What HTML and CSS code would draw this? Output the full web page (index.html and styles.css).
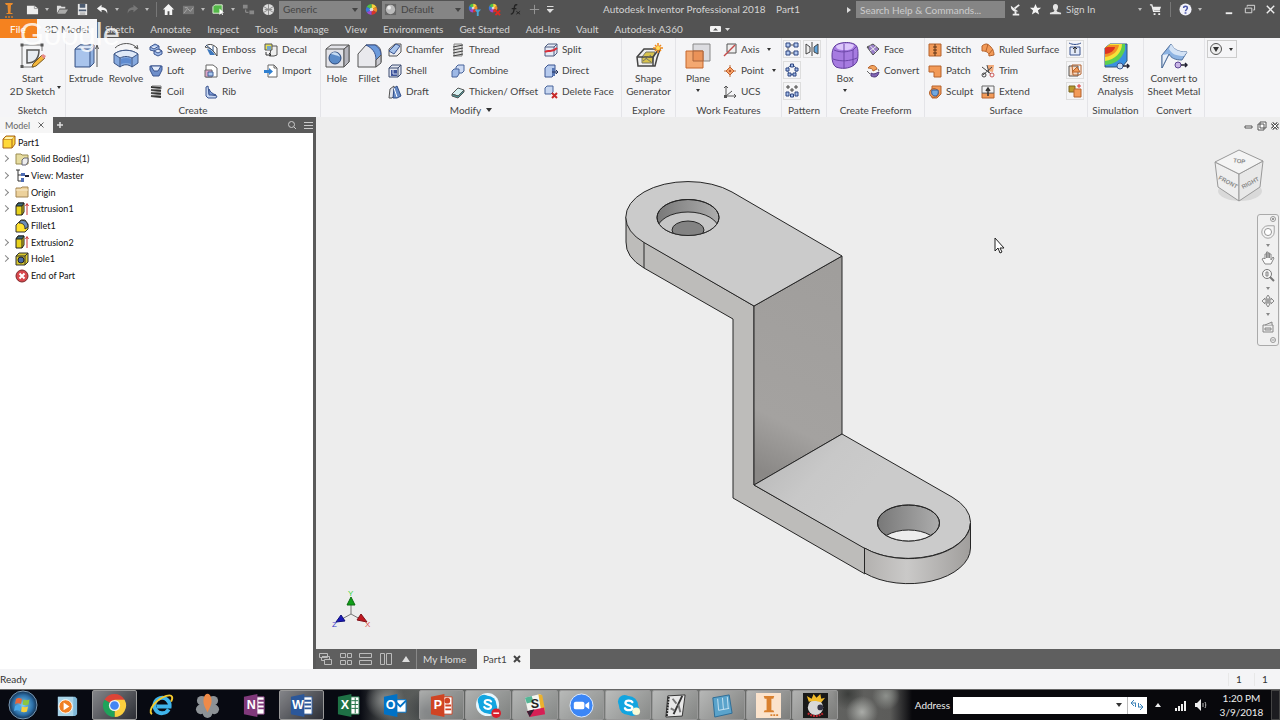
FILE: index.html
```html
<!DOCTYPE html>
<html lang="en">
<head>
  <meta charset="UTF-8" />
  <meta name="viewport" content="width=device-width, initial-scale=1.0" />
  <title>Autodesk Inventor Professional 2018 - Part1</title>
  <link rel="stylesheet" href="styles.css">
</head>
<body>
  <!-- shared icons -->
  <svg class="sprite" aria-hidden="true">
    <symbol id="wheel" viewBox="0 0 14 14">
      <path d="M7 7V1A6 6 0 0 1 12.200 4z" fill="#f7d23a"/><path d="M7 7l5.200-3a6 6 0 0 1 0 6z" fill="#f08a24"/>
      <path d="M7 7l5.200 3A6 6 0 0 1 7 13z" fill="#d8342c"/><path d="M7 7v6a6 6 0 0 1-5.200-3z" fill="#9a4bd0"/>
      <path d="M7 7l-5.200 3a6 6 0 0 1 0-6z" fill="#3a78e0"/><path d="M7 7L1.800 4A6 6 0 0 1 7 1z" fill="#4fc04a"/>
      <circle cx="7" cy="7" r="2" fill="#fff" opacity=".7"/>
    </symbol>
    <symbol id="extrusion" viewBox="0 0 14 14">
      <path d="M1 4l2-3h6v9l-2 3H1z" fill="#e8d21c" stroke="#222"/><path d="M1 4l2-3h6L7 4z" fill="#3d6a78" stroke="#222"/><path d="M7 4v9" stroke="#222"/>
      <path d="M12 13V2M10.500 4L12 1.500 13.500 4" stroke="#c33" fill="none"/>
    </symbol>
    <symbol id="skype" viewBox="0 0 26 26">
      <circle cx="9" cy="9" r="7" fill="#12a5e0"/><circle cx="17" cy="17" r="7" fill="#12a5e0"/><circle cx="13" cy="13" r="10" fill="#12a5e0"/>
      <path d="M17 9.500c-1-2-7-2.500-7.200.7-.2 3.200 7.400 2 7.200 5.300-.2 3.200-6.500 3-7.700.3" fill="none" stroke="#fff" stroke-width="2.400" stroke-linecap="round"/>
    </symbol>
  </svg>

  <header class="top">
    <div class="titlebar">
      <button class="logo" aria-label="Inventor"><svg viewBox="0 0 14 18"><path d="M3 2h8l-1 2H9l-.5 8H10l1 1H4l1-1h1L5.500 4H4z" fill="#e88a2c"/><path d="M3 16h8" stroke="#b5702e" stroke-width="2" stroke-dasharray="2 1"/></svg></button>
      <button class="qat" aria-label="New"><svg viewBox="0 0 14 14"><path d="M1 3h8l4 3v6H1z" fill="#eee"/><path d="M9 3v3h4" fill="none" stroke="#999"/></svg></button>
      <button class="caret" aria-label="New options"></button>
      <button class="qat" aria-label="Open"><svg viewBox="0 0 14 14"><path d="M1 11V3h4l1 1h4v2H4z" fill="#ddd"/><path d="M4 7h9l-3 4.500H1.500z" fill="#aaa"/></svg></button>
      <button class="qat" aria-label="Save"><svg viewBox="0 0 14 14"><path d="M2 1h10v12H2z" fill="#e8e8e8"/><path d="M4 1h6v4H4zM3 7h8v2H3z" fill="#4c5b70"/><path d="M4 10h6v3H4z" fill="#bbb"/></svg></button>
      <button class="qat" aria-label="Undo"><svg viewBox="0 0 14 14"><path d="M6 2L1 6l5 4V7.500c3 0 5 .5 6 4C13 7 10 4.500 6 4.500z" fill="#f4f4f4"/></svg></button>
      <button class="caret" aria-label="Undo list"></button>
      <button class="qat" aria-label="Redo"><svg viewBox="0 0 14 14"><path d="M8 2l5 4-5 4V7.500c-3 0-5 .5-6 4C1 7 4 4.500 8 4.500z" fill="#777"/></svg></button>
      <button class="caret" aria-label="Redo list"></button>
      <span class="divider"></span>
      <button class="qat" aria-label="Home"><svg viewBox="0 0 14 14"><path d="M7 1L1 7h2v6h3V9h2v4h3V7h2z" fill="#f4f4f4"/></svg></button>
      <button class="qat" aria-label="Return"><svg viewBox="0 0 14 14"><path d="M1 3h12v9H1z" fill="#777"/><path d="M2 11l4-5 3 3 3-4M3 5h3" stroke="#aaa" fill="none"/></svg></button>
      <button class="caret" aria-label="Return options"></button>
      <button class="qat" aria-label="Select"><svg viewBox="0 0 14 14"><path d="M1 4l2-2h8v7L9 11H1z" fill="#54b849" stroke="#e8f5e0"/><path d="M8 6v7l2-2 1 2 1-.5-1-2h2z" fill="#fff"/></svg></button>
      <button class="caret" aria-label="Select options"></button>
      <button class="qat" aria-label="Update"><svg viewBox="0 0 14 14"><path d="M1 2h5v4H1zM8 8h5v4H8z" fill="#888"/><path d="M4 7v3h3" stroke="#999" fill="none"/></svg></button>
      <button class="qat" aria-label="Material"><svg viewBox="0 0 14 14"><circle cx="7" cy="7" r="6" fill="#ddd"/><path d="M2 4l10 6M2 10l10-6M7 1v12M3 7h8" stroke="#888"/></svg></button>
      <div class="combo"><select aria-label="Material"><option>Generic</option></select></div>
      <button class="qat" aria-label="Appearance"><svg><use href="#wheel"/></svg></button>
      <div class="combo ball"><svg viewBox="0 0 14 14"><path d="M1 1h12v12H1z" fill="#666"/><circle cx="7" cy="7" r="5" fill="#bbb"/><circle cx="5.500" cy="5" r="2" fill="#eee"/></svg><select aria-label="Appearance"><option>Default</option></select></div>
      <button class="qat" aria-label="Adjust"><svg viewBox="0 0 14 14"><use href="#wheel" width="11" height="11"/><path d="M7 7h7l-2.500 3v4h-2v-4z" fill="#4aa8d8"/></svg></button>
      <button class="qat" aria-label="Clear"><svg viewBox="0 0 14 14"><use href="#wheel" width="11" height="11"/><path d="M8 8l5 5M13 8l-5 5" stroke="#e02a20" stroke-width="2"/></svg></button>
      <button class="qat" aria-label="Parameters"><svg viewBox="0 0 14 14"><path d="M10 2C7 1 7 4 6.500 7S6 12 3 12M4 6h5" stroke="#222" stroke-width="1.500" fill="none"/><path d="M9 9l4 3M13 9l-4 3" stroke="#222"/></svg></button>
      <button class="qat" aria-label="Add"><svg viewBox="0 0 14 14"><path d="M7 2v10M2 7h10" stroke="#999"/></svg></button>
      <button class="more" aria-label="Customize"></button>
      <h1 class="title">Autodesk Inventor Professional 2018 <span>Part1</span></h1>
      <span class="play"></span>
      <input class="search" type="text" placeholder="Search Help &amp; Commands..." aria-label="Search Help and Commands">
      <button class="qat" aria-label="Communication"><svg viewBox="0 0 14 14"><path d="M2 3c0 5 3 7 8 6z" fill="#eee"/><path d="M4 12.500h7M7 9v4M6 6l5-4" stroke="#eee" stroke-width="2"/></svg></button>
      <button class="qat" aria-label="Favorites"><svg viewBox="0 0 14 14"><path d="M7 1l1.700 4.200H13L9.600 8l1.300 4.500L7 10l-3.900 2.500L4.400 8 1 5.200h4.300z" fill="#f4f4f4"/></svg></button>
      <button class="qat" aria-label="Account"><svg viewBox="0 0 14 14"><path d="M7 1c4 0 3 6 1 7l1 1.500 4 1V12H1v-1.500l4-1L6 8C4 7 3 1 7 1z" fill="#e4e4e4"/></svg></button>
      <button class="signin">Sign In</button>
      <button class="caret" aria-label="Sign in options"></button>
      <button class="qat" aria-label="Store"><svg viewBox="0 0 14 14"><path d="M1 2h2l2 7h7" stroke="#eee" fill="none" stroke-width="1.500"/><path d="M3 4h10l-1.500 4H5zM5 11h2v2H5zM10 11h2v2h-2z" fill="#eee"/></svg></button>
      <span class="divider wide"></span>
      <button class="qat" aria-label="Help"><svg viewBox="0 0 14 14"><circle cx="7" cy="7" r="6.500" fill="#f2f2fa"/><path d="M5 5.500C5 3 9 3 9 5.500 9 7 7 7 7 9" stroke="#4a55a8" fill="none" stroke-width="1.600"/><path d="M6 10h2v1.500H6z" fill="#4a55a8"/></svg></button>
      <button class="caret" aria-label="Help options"></button>
      <div class="winbtns">
        <button class="qat" aria-label="Minimize"><svg viewBox="0 0 14 14"><path d="M4 11h7" stroke="#eee" stroke-width="2"/></svg></button>
        <button class="qat" aria-label="Restore"><svg viewBox="0 0 14 14"><path d="M4.500 4V2.500h8v5H11M2.500 5.500h7v5h-7z" stroke="#ddd" fill="none"/></svg></button>
        <button class="qat" aria-label="Close"><svg viewBox="0 0 14 14"><path d="M3 3l8 8M11 3l-8 8" stroke="#eee" stroke-width="1.500"/></svg></button>
      </div>
    </div>

    <nav class="tabs">
      <a class="file" href="#">File</a>
      <a class="active" href="#">3D Model</a>
      <a href="#">Sketch</a>
      <a href="#">Annotate</a>
      <a href="#">Inspect</a>
      <a href="#">Tools</a>
      <a href="#">Manage</a>
      <a href="#">View</a>
      <a href="#">Environments</a>
      <a href="#">Get Started</a>
      <a href="#">Add-Ins</a>
      <a href="#">Vault</a>
      <a href="#">Autodesk A360</a>
      <button class="ribbon-toggle" aria-label="Minimize ribbon"><svg viewBox="0 0 20 8"><rect x="0" y="1" width="11" height="6" rx="1" fill="#f2f2f2"/><path d="M3 5.500L5.500 3 8 5.500z" fill="#555"/><path d="M15 3h5l-2.500 3z" fill="#ddd"/></svg></button>
    </nav>
    <div class="watermark">Google</div>
  </header>

  <div class="ribbon">
    <section class="panel sketch">
      <div class="tools">
        <button class="big"><svg viewBox="0 0 28 28"><path d="M3 3h20M3 3v22M3 25h12M23 3v6" stroke="#777" fill="none"/><path d="M8 8v13c8 0 12-5 12-13z" fill="#e8ecf2" stroke="#555" stroke-width="1.500"/><path d="M1.500 1.500h3v3h-3zM21.500 1.500h3v3h-3zM1.500 23h3v3h-3z" fill="#555"/><path d="M14 22l9-9 3 3-9 8-4 1z" fill="#f5b83c" stroke="#7a5a20"/><path d="M22 14l2-2 3 2-2 3z" fill="#e58b8b"/></svg>Start<br>2D Sketch<i class="down side"></i></button>
      </div>
      <h2>Sketch</h2>
    </section>

    <section class="panel create">
      <div class="tools">
        <button class="big"><svg viewBox="0 0 28 28"><path d="M3 7l5-4h14v18l-4 4H3z" fill="#8fb0e0" stroke="#3e5685"/><path d="M3 7l5-4h14l-4 4z" fill="#dbe6f7" stroke="#3e5685"/><path d="M18 7v18" stroke="#3e5685"/><path d="M4 8h13v16H4z" fill="#a9c4ec"/><path d="M25 25V4M23.500 7L25 3l1.500 4" stroke="#555" fill="none"/></svg>Extrude</button>
        <button class="big"><svg viewBox="0 0 28 28"><path d="M3 6C9 0 20 0 25 6M22 5l4 2-1-4" stroke="#555" fill="none"/><path d="M2 12c7-5 17-5 24 0v9l-6 4c-4-3-8-3-12 0l-6-4z" fill="#86a9de" stroke="#3e5685"/><path d="M2 12c7-5 17-5 24 0l-6 4c-4-2-8-2-12 0z" fill="#dfe9f8" stroke="#3e5685"/><path d="M8 16v9M20 16v9" stroke="#3e5685"/><path d="M9 17c3-1.500 7-1.500 10 0v5c-3-1.500-7-1.500-10 0z" fill="#5f8bd0"/></svg>Revolve</button>
        <div class="col">
          <button class="small"><svg viewBox="0 0 14 14"><path d="M1 4l5-3 4 2v3l3 2v3l-4 2-4-2V8L1 7z" fill="#9fbbea" stroke="#3b5590"/><path d="M1 4l4 2 5-3M5 8l4-2 4 2-4 2z" stroke="#3b5590" fill="#e4ecfa"/></svg>Sweep</button>
          <button class="small"><svg viewBox="0 0 14 14"><path d="M1 2h12v4l-3 6H4L1 6z" fill="#6f8fca" stroke="#3b5590"/><path d="M2 2h10L9 7H5z" fill="#e4ecfa" stroke="#3b5590"/></svg>Loft</button>
          <button class="small"><svg viewBox="0 0 14 14"><path d="M2 2l10 1M2 5l10 1M2 8l10 1M2 11l10 1" stroke="#333" stroke-width="2"/><path d="M3 1h9v3L2 5M12 7L2 8M12 10L2 11" stroke="#777" fill="none"/></svg>Coil</button>
        </div>
        <div class="col">
          <button class="small"><svg viewBox="0 0 14 14"><path d="M1 4c3-4 8-3 12 1v8l-3-4C7 5 4 5 1 4z" fill="#fff" stroke="#444"/><path d="M3 6c3 0 6 2 8 6H6z" fill="#3e78bd"/><path d="M2 2l6 5M9 3v5" stroke="#2b4a78"/></svg>Emboss</button>
          <button class="small"><svg viewBox="0 0 14 14"><path d="M2 1h7l4 3v9H2z" fill="#fff" stroke="#666"/><path d="M1 6h7v7H1z" fill="#dba6c8" stroke="#666"/><path d="M4 8h5v4H4z" fill="#a9c8ee" stroke="#46639a"/></svg>Derive</button>
          <button class="small"><svg viewBox="0 0 14 14"><path d="M2 2l2-1 1 8 8 2-1 2H4l-2-2z" fill="#c7d7f3" stroke="#3b5590"/><path d="M5 4v6h7c-3-1-6-3-7-6z" fill="#7c9ad6" stroke="#3b5590"/></svg>Rib</button>
        </div>
        <div class="col">
          <button class="small"><svg viewBox="0 0 14 14"><path d="M7 3h6v9l-3 1H6z" fill="#eee" stroke="#555"/><path d="M1 1h7v6H1z" fill="#e8e158" stroke="#555"/><path d="M3 3h4v4H3z" fill="#74a5c8"/><path d="M2 9v3h4M5 10l2 2-2 1" stroke="#333" fill="none"/></svg>Decal</button>
          <button class="small"><svg viewBox="0 0 14 14"><path d="M4 1h6l3 3v9H4z" fill="#fff" stroke="#666"/><path d="M10 1v3h3" stroke="#666" fill="none"/><path d="M0 6h5V4l4 3.500L5 11V9H0z" fill="#2f7fd0"/></svg>Import</button>
        </div>
      </div>
      <h2>Create</h2>
    </section>

    <section class="panel modify">
      <div class="tools">
        <button class="big"><svg viewBox="0 0 28 28"><path d="M3 7l5-4h18v17l-5 5H3z" fill="#e3e3e8" stroke="#555"/><path d="M3 7h18l5-4M21 7v18" stroke="#555" fill="none"/><path d="M21 7l5-4v17l-5 5z" fill="#b5b5bd" stroke="#555"/><circle cx="12" cy="16" r="6" fill="#5b8bc8" stroke="#2d4a7c"/><path d="M8 12c2-3 8-2 9 3-3-2-6-2-9-3z" fill="#c7dcf2"/></svg>Hole</button>
        <button class="big"><svg viewBox="0 0 28 28"><path d="M3 12l8-9h10c4 2 5 5 5 9v8l-5 5H3z" fill="#e9e9ed" stroke="#555"/><path d="M11 3h9c4 2 6 6 6 10l-5 5C21 10 17 6 11 3z" fill="#6c9adb" stroke="#3b5590"/><path d="M21 18v7" stroke="#555"/><path d="M21 18l5-5v8l-5 4z" fill="#c8c8cf" stroke="#555"/></svg>Fillet</button>
        <div class="col">
          <button class="small"><svg viewBox="0 0 14 14"><path d="M1 6l6-5h6v8l-4 4H1z" fill="#ececf0" stroke="#555"/><path d="M1 8l7-7 4 2-6 8z" fill="#a8c4ec" stroke="#3b5590"/></svg>Chamfer</button>
          <button class="small"><svg viewBox="0 0 14 14"><path d="M1 4l3-3h9v9l-3 3H1z" fill="#e0e4ee" stroke="#3b4a70"/><path d="M3 6h6v6H3z" fill="#3d539a"/><path d="M5 6v4h4" stroke="#cfd8f0" fill="none"/><path d="M1 4h9v9M10 4l3-3" stroke="#3b4a70" fill="none"/></svg>Shell</button>
          <button class="small"><svg viewBox="0 0 14 14"><path d="M2 4l4-3v10l-2 2H1z" fill="#dfe2ea" stroke="#555"/><path d="M6 3l3-2 4 10-4 2H5z" fill="#6589c6" stroke="#334e88"/><path d="M6 3l3 9" stroke="#fff"/></svg>Draft</button>
        </div>
        <div class="col">
          <button class="small"><svg viewBox="0 0 14 14"><path d="M3 1h8v12H3z" fill="#ddd" stroke="#888"/><path d="M2 4l10-2M2 7l10-2M2 10l10-2M2 13l10-2" stroke="#444"/></svg>Thread</button>
          <button class="small"><svg viewBox="0 0 14 14"><path d="M5 3l2-2h6v6l-2 2H5z" fill="#cbd9f3" stroke="#46639a"/><path d="M1 7l2-2h5v5l-2 3H1z" fill="#9db8e6" stroke="#46639a"/></svg>Combine</button>
          <button class="small"><svg viewBox="0 0 14 14"><path d="M1 9l6-6 6 2-6 6z" fill="#d6f0f0" stroke="#555"/><path d="M1 9v2l6 2 6-6V5l-6 6z" fill="#4a9a9c" stroke="#555"/></svg>Thicken/ Offset</button>
        </div>
        <div class="col">
          <button class="small"><svg viewBox="0 0 14 14"><path d="M1 4l3-3h9v9l-3 3H1z" fill="#e5eaf5" stroke="#4f5d80"/><path d="M1 4h9v9M10 4l3-3" stroke="#4f5d80" fill="none"/><path d="M1 9c4-3 6 2 12-4" stroke="#d8303a" stroke-width="2" fill="none"/></svg>Split</button>
          <button class="small"><svg viewBox="0 0 14 14"><path d="M1 4l3-3h7v9l-3 3H1z" fill="#b7cbee" stroke="#3b5590"/><path d="M8 4h3v8H8z" fill="#5877b5"/><path d="M8 8h6M12 6l2 2-2 2" stroke="#26355c" fill="none"/></svg>Direct</button>
          <button class="small"><svg viewBox="0 0 14 14"><path d="M1 3l2-2h6v6L7 9H1z" fill="#c7d6f0" stroke="#46639a"/><path d="M8 8l5 5M13 8l-5 5" stroke="#c82a2a" stroke-width="2"/></svg>Delete Face</button>
        </div>
      </div>
      <h2>Modify <i class="down"></i></h2>
    </section>

    <section class="panel explore">
      <div class="tools">
        <button class="big"><svg viewBox="0 0 28 28"><path d="M2 15l7-8h16l-3 9-2 8H3z" fill="#efefef" stroke="#444" stroke-width="1.500"/><path d="M7 15l4-5h9l-3 11H7z" fill="#d9c34c" stroke="#776"/><path d="M2 15h16l6-8M18 15v9" stroke="#444" fill="none" stroke-width="1.500"/><path d="M8 19l8-6M8 14l8 6" stroke="#776"/><path d="M23 1v10M18 6h10M20 3l6 6M26 3l-6 6" stroke="#ef8a1d" stroke-width="1.500"/><circle cx="23" cy="6" r="2" fill="#ffe05a"/></svg>Shape<br>Generator</button>
      </div>
      <h2>Explore</h2>
    </section>

    <section class="panel work">
      <div class="tools">
        <button class="big"><svg viewBox="0 0 28 28"><path d="M9 2h17v17H9z" fill="#dcdce0" stroke="#888"/><path d="M2 9h17v17H2z" fill="#f3a871" stroke="#c5662c"/><path d="M9 9h10v10H9z" fill="#eb9258" stroke="#a8653c"/></svg>Plane<i class="down"></i></button>
        <div class="col">
          <button class="small"><svg viewBox="0 0 14 14"><path d="M4 1h9v9H4" fill="#eee" stroke="#555"/><path d="M1 13L12 2" stroke="#c34a4a" stroke-width="1.500"/><path d="M4 1v8" stroke="#555"/></svg>Axis<i class="down"></i></button>
          <button class="small"><svg viewBox="0 0 14 14"><path d="M7 1v12M1 7h12" stroke="#c2703c"/><path d="M7 3l4 4-4 4-4-4z" fill="#f3a066" stroke="#c2602c"/><circle cx="7" cy="7" r="1" fill="#a03c1c"/></svg>Point<i class="down"></i></button>
          <button class="small"><svg viewBox="0 0 14 14"><path d="M3 1v10h10M3 11l6-5M1 3l2-2 2 2M11 9l2 2-2 2" stroke="#555" fill="none"/><path d="M1 10h3v3H1z" fill="#555"/></svg>UCS</button>
        </div>
      </div>
      <h2>Work Features</h2>
    </section>

    <section class="panel pattern">
      <div class="tools">
        <div class="col icons">
          <button aria-label="Rectangular"><svg viewBox="0 0 14 14"><path d="M3 3h8M3 3v8M3 11h8" stroke="#555"/><path d="M1 1h4v4H1zM9 1h4v4H9zM1 9h4v4H1zM9 9h4v4H9z" fill="#b5caf0" stroke="#2c4580"/></svg></button>
          <button aria-label="Circular"><svg viewBox="0 0 14 14"><circle cx="7" cy="7" r="4.500" fill="none" stroke="#46639a"/><path d="M5.500 1h3v3h-3zM1 5h3v3H1zM10 5h3v3h-3zM3 10h3v3H3zM8 10h3v3H8z" fill="#a5bdea" stroke="#2c4580"/></svg></button>
          <button aria-label="Sketch driven"><svg viewBox="0 0 14 14"><path d="M1 3h4M3 1v4M9 3h4M11 1v4M5 6h4M7 4v4" stroke="#444"/><path d="M1 8h3v4H1zM5.500 10h3v3h-3zM10 8h3v4h-3z" fill="#a5bdea" stroke="#2c4580"/></svg></button>
        </div>
        <div class="col icons">
          <button aria-label="Mirror"><svg viewBox="0 0 14 14"><path d="M1 2l4 3v5l-4 2z" fill="#eee" stroke="#444"/><path d="M13 2L9 5v5l4 2z" fill="#5fa4dc" stroke="#444"/><path d="M7 0v14" stroke="#444"/></svg></button>
        </div>
      </div>
      <h2>Pattern</h2>
    </section>

    <section class="panel freeform">
      <div class="tools">
        <button class="big"><svg viewBox="0 0 28 28"><path d="M7 2C12 0 19 0 23 2c4 2 4 6 4 11 0 5-1 8-4 10-5 4-13 4-18 2-3-2-4-6-4-11S2 4 7 2z" fill="#a67be0" stroke="#5d3a99"/><path d="M5 4c5-3 13-3 18-1-1 4-4 5-8 5-5 0-10 0-10-4z" fill="#dcc6fb"/><path d="M3 8c7 3 13 2 19 0l4-4M13 2v24M22 8v16M2 17c8 3 17 2 24-1" stroke="#6c47a8" fill="none"/></svg>Box<i class="down"></i></button>
        <div class="col">
          <button class="small"><svg viewBox="0 0 14 14"><path d="M1 4l6-3 6 5-6 6z" fill="#9a80c8" stroke="#555"/><path d="M4 2.500l6 6.500M4 8l6-4.500" stroke="#eee"/><path d="M1 4l2 1" stroke="#555"/></svg>Face</button>
          <button class="small"><svg viewBox="0 0 14 14"><path d="M2 4c3-4 8-3 9 1L7 7C7 5 5 4 2 4z" fill="#f2a25c" stroke="#b3622c"/><path d="M5 9c3 2 5 0 8-1-1 5-4 6-8 4z" fill="#8165b5" stroke="#50397c"/><path d="M1 7l3 3M12 5l1 2" stroke="#666"/></svg>Convert</button>
        </div>
      </div>
      <h2>Create Freeform</h2>
    </section>

    <section class="panel surface">
      <div class="tools">
        <div class="col">
          <button class="small"><svg viewBox="0 0 14 14"><path d="M1 1h12v12H1z" fill="#f29a58" stroke="#b5632c"/><path d="M7 1v12M5 4h4M5 7h4M5 10h4" stroke="#5c3418"/></svg>Stitch</button>
          <button class="small"><svg viewBox="0 0 14 14"><path d="M1 2h12v11H6V8H1z" fill="#f29a58" stroke="#b5632c"/></svg>Patch</button>
          <button class="small"><svg viewBox="0 0 14 14"><path d="M4 1h9v8l-4 4H4z" fill="#f29a58" stroke="#b5632c"/><circle cx="6" cy="8" r="4.500" fill="#f29a58" stroke="#b5632c"/><path d="M4 5h6c1 4-1 6-3 6-3 0-4-3-3-6z" fill="#72a8e0" stroke="#2f5c9a"/></svg>Sculpt</button>
        </div>
        <div class="col">
          <button class="small"><svg viewBox="0 0 14 14"><path d="M1 3c2-2 4-2 5-2 4 2 7 6 7 11l-5 1C8 9 5 8 1 8z" fill="#f29a58" stroke="#b5632c"/><path d="M5 8l2-7M8 11l4-5" stroke="#b5632c"/></svg>Ruled Surface</button>
          <button class="small"><svg viewBox="0 0 14 14"><path d="M7 1h6l-1 7-5-1z" fill="#f0a878"/><path d="M1 3l9 7M2 11l9-8M6 1l2 8" stroke="#444" fill="none"/><circle cx="3" cy="11" r="2" fill="none" stroke="#444"/><circle cx="11" cy="11" r="2" fill="none" stroke="#c55"/></svg>Trim</button>
          <button class="small"><svg viewBox="0 0 14 14"><path d="M1 8h12v5H1z" fill="#f29a58" stroke="#b5632c"/><path d="M1 1h12v7H1z" fill="#f2f2f4" stroke="#666"/><path d="M7 11V4M5 6l2-3 2 3" stroke="#333" stroke-width="1.500" fill="none"/></svg>Extend</button>
        </div>
        <div class="col icons">
          <button aria-label="Replace Face"><svg viewBox="0 0 14 14"><path d="M1 1c4 2 8 2 12 0M2 5v8h10V5z" fill="#e3eaf8" stroke="#3b5590"/><path d="M7 11V5M5 7l2-2 2 2" stroke="#222" fill="none"/></svg></button>
          <button aria-label="Repair Bodies"><svg viewBox="0 0 14 14"><path d="M1 3h9v10H1z" fill="#f7d8c0" stroke="#555"/><path d="M4 2h9v9l-2 1H5z" fill="none" stroke="#b5632c"/><path d="M5 8l4-4 3 5H4z" fill="#f29a58" stroke="#b5632c"/></svg></button>
          <button aria-label="Copy Object"><svg viewBox="0 0 14 14"><path d="M1 2h6v6H1z" fill="#b99a2e" stroke="#7b6520"/><path d="M6 5h7v8H6z" fill="#f29a58" stroke="#b5632c"/><path d="M9 2h4M11 0v4" stroke="#d33"/></svg></button>
        </div>
      </div>
      <h2>Surface</h2>
    </section>

    <section class="panel simulation">
      <div class="tools">
        <button class="big"><svg viewBox="0 0 28 28"><path d="M3 6l5-4h17v17l-5 6H3z" fill="#3a8fe0" stroke="#357"/><path d="M3 6l5-4h15v6c-4 10-10 14-20 15z" fill="#5ccf4f"/><path d="M3 6l5-4h12c0 8-7 16-17 17z" fill="#f5e23a"/><path d="M3 6l4-3h10C16 9 11 14 3 15z" fill="#f29124"/><path d="M3 6l2-1h8c0 3-5 7-10 7z" fill="#dd3322"/><circle cx="18" cy="24" r="3" fill="#c7dcf2" stroke="#3b5590"/><path d="M21 24h6M25 22l2 2-2 2" stroke="#223" stroke-width="1.500" fill="none"/></svg>Stress<br>Analysis</button>
      </div>
      <h2>Simulation</h2>
    </section>

    <section class="panel convert">
      <div class="tools">
        <button class="big"><svg viewBox="0 0 28 28"><path d="M2 13L11 2c3 5 6 8 16 8l-5 8c-7 0-11-2-13-6l-7 14z" fill="#8db3e2" stroke="#51709c"/><path d="M11 2c3 5 6 8 16 8l-3 4C16 14 12 12 9 7z" fill="#d3e2f5"/><path d="M2 13v13l7-14" fill="#e8eff9" stroke="#51709c"/><circle cx="18" cy="23" r="3" fill="#c9b5e5" stroke="#5c4592"/><path d="M21 23h6M25 21l2 2-2 2" stroke="#223" stroke-width="1.500" fill="none"/></svg>Convert to<br>Sheet Metal</button>
      </div>
      <h2>Convert</h2>
    </section>

    <div class="ribbon-end">
      <button aria-label="Show panels"><svg viewBox="0 0 14 14"><circle cx="7" cy="7" r="5.500" fill="#eee" stroke="#555"/><path d="M4 5h6l-3 5z" fill="#333"/></svg><i class="down"></i></button>
    </div>
  </div>

  <main class="workspace">
    <aside class="browser">
      <div class="browser-head">
        <button class="browser-tab">Model <svg viewBox="0 0 8 8"><path d="M1.500 1.500l5 5M6.500 1.500l-5 5" stroke="#666"/></svg></button>
        <button aria-label="Add browser"><svg viewBox="0 0 10 10"><path d="M5 2v6M2 5h6" stroke="#ddd" stroke-width="1.500"/></svg></button>
        <div class="browser-tools">
          <button aria-label="Search"><svg viewBox="0 0 10 10"><circle cx="4.500" cy="4.500" r="3" fill="none" stroke="#ccc"/><path d="M7 7l2 2" stroke="#ccc"/></svg></button>
          <button aria-label="Menu"><svg viewBox="0 0 10 10"><path d="M1 2.500h9M1 5.500h9M1 8.500h9" stroke="#ccc"/></svg></button>
        </div>
      </div>
      <ul class="tree">
        <li class="root"><svg viewBox="0 0 14 14"><path d="M1 4l3-3h9v8l-3 4H1z" fill="#ffd93b" stroke="#a8641c"/><path d="M1 4h9v9M10 4l3-3" stroke="#a8641c" fill="none"/><path d="M2 4l2-2h8l-2 2z" fill="#fff3b0"/></svg>Part1</li>
        <li class="fold"><svg viewBox="0 0 14 14"><path d="M1 2h5l1 1h6v9H1z" fill="#e6dca0" stroke="#9a8c50"/><path d="M7 8l2-2h4v4l-2 3H7z" fill="#eee" stroke="#667"/></svg>Solid Bodies(1)</li>
        <li class="fold"><svg viewBox="0 0 14 14"><path d="M1 1h4M3 1v11h4M3 6h5" stroke="#333" fill="none"/><path d="M6 4h4v3H6zM6 9h3v4H6z" fill="#4d6cb5"/><path d="M10 7h4" stroke="#223" stroke-width="2"/></svg>View: Master</li>
        <li class="fold"><svg viewBox="0 0 14 14"><path d="M1 3h5l1-1h6v10H1z" fill="#ecd19b" stroke="#a38552"/><path d="M1 5h12" stroke="#f8ecd0"/></svg>Origin</li>
        <li class="fold"><svg><use href="#extrusion"/></svg>Extrusion1</li>
        <li><svg viewBox="0 0 14 14"><path d="M1 6l5-5h4l3 4v5l-3 3H1z" fill="#ffe12e" stroke="#333"/><path d="M5 2c4-2 8 1 8 6l-3 2C10 6 8 4 4 4z" fill="#6b8cb8" stroke="#333"/></svg>Fillet1</li>
        <li class="fold"><svg><use href="#extrusion"/></svg>Extrusion2</li>
        <li class="fold"><svg viewBox="0 0 14 14"><path d="M1 4l3-3h9v9l-3 3H1z" fill="#d9c92c" stroke="#333"/><path d="M10 4v9M1 4h9l3-3" stroke="#333" fill="none"/><circle cx="6" cy="8" r="3" fill="#476aa8" stroke="#222"/></svg>Hole1</li>
        <li><svg viewBox="0 0 14 14"><circle cx="7" cy="7" r="6" fill="#d8474c" stroke="#7c2a2c"/><path d="M4.500 4.500l5 5M9.500 4.500l-5 5" stroke="#fff" stroke-width="2"/></svg>End of Part</li>
      </ul>
    </aside>

    <section class="document">
      <div class="viewport">
        <svg class="model" viewBox="316 117 964 532" role="img" aria-label="Part1 model">
          <defs>
            <linearGradient id="wall" x1=".6" y1="0" x2=".4" y2="1"><stop offset="0" stop-color="#a09e9c"/><stop offset=".75" stop-color="#a4a2a0"/><stop offset="1" stop-color="#8a8886"/></linearGradient>
            <linearGradient id="deck" x1="0" y1="0" x2=".6" y2=".3"><stop offset="0" stop-color="#b4b4b4"/><stop offset=".6" stop-color="#c8c8c8"/><stop offset="1" stop-color="#cbcbcb"/></linearGradient>
            <linearGradient id="rim" x1="0" y1="0" x2="1" y2="0"><stop offset="0" stop-color="#b3b1af"/><stop offset=".4" stop-color="#cac9c8"/><stop offset="1" stop-color="#a09e9c"/></linearGradient>
            <linearGradient id="bore" x1="0" y1="0" x2="1" y2="0"><stop offset="0" stop-color="#787878"/><stop offset="1" stop-color="#adadad"/></linearGradient>
            <clipPath id="topHole"><ellipse cx="688" cy="217.500" rx="31" ry="18"/></clipPath>
            <clipPath id="lowHole"><ellipse cx="908.500" cy="523" rx="31" ry="18"/></clipPath>
          </defs>
          <g stroke="#262626" stroke-linejoin="round">
            <path d="M626 217v25a62 36 0 0 0 18 26l89 51v179l132 76V548l-111-63V306l-110-64z" fill="#bdbcba"/>
            <path d="M644 242v26" fill="none"/>
            <path d="M754 306l88-50v178l-88 51z" fill="url(#wall)"/>
            <path d="M644 242.500A61 35 0 0 1 732 192l110 64-88 50z" fill="#cbcbcb"/>
            <path d="M754 485l88-51 110 63a61 35 0 0 1-88 51z" fill="url(#deck)"/>
            <path d="M864.500 548a62 36 0 0 0 106-25v25a62 36 0 0 1-106 25z" fill="url(#rim)"/>
            <ellipse cx="688" cy="217.500" rx="31" ry="18" fill="url(#bore)"/>
            <g clip-path="url(#topHole)">
              <ellipse cx="688" cy="230" rx="31" ry="18" fill="#c6c6c6"/>
              <ellipse cx="688" cy="230" rx="16" ry="9" fill="#838383"/>
            </g>
            <ellipse cx="908.500" cy="523" rx="31" ry="18" fill="url(#bore)"/>
            <g clip-path="url(#lowHole)"><ellipse cx="908.500" cy="548" rx="31" ry="18" fill="#ededed"/></g>
            <ellipse cx="688" cy="217.500" rx="31" ry="18" fill="none"/>
            <ellipse cx="908.500" cy="523" rx="31" ry="18" fill="none"/>
          </g>
          <path d="M995 238v13l3-3 2 5 2-1-2-4h4z" fill="#fff" stroke="#222"/>
        </svg>
        <div class="mdi">
          <button aria-label="Minimize document"><svg viewBox="0 0 10 10"><path d="M1 5h7v2H1z" fill="#fff" stroke="#555"/></svg></button>
          <button aria-label="Restore document"><svg viewBox="0 0 10 10"><path d="M3 1h6v6H3zM1 3h6v6H1z" fill="#fff" stroke="#555"/></svg></button>
          <button aria-label="Close document"><svg viewBox="0 0 10 10"><path d="M2 2l6 6M8 2L2 8" stroke="#555" stroke-width="3"/><path d="M2 2l6 6M8 2L2 8" stroke="#fff"/></svg></button>
        </div>
        <svg class="viewcube" viewBox="0 0 60 62" role="img" aria-label="View cube">
          <ellipse cx="31" cy="46" rx="22" ry="10" fill="#ccc" opacity=".6"/>
          <path d="M6 17l24 12v27L9 42z" fill="#eee" stroke="#999"/><path d="M30 29l24-13-3 26-21 14z" fill="#e8e8e8" stroke="#999"/>
          <path d="M30 5L6 17l24 12 24-13z" fill="#f4f4f4" stroke="#999"/>
          <text x="24" y="18" transform="rotate(8 30 17)">TOP</text>
          <text x="9" y="34" transform="rotate(28 9 34)">FRONT</text>
          <text x="34" y="44" transform="rotate(-28 34 44)">RIGHT</text>
        </svg>
        <div class="navbar">
          <button aria-label="Close bar"><svg class="dot" viewBox="0 0 8 8"><circle cx="4" cy="4" r="2.500" fill="none" stroke="#999"/><path d="M3 3l2 2M5 3L3 5" stroke="#999"/></svg></button>
          <button aria-label="Steering wheel"><svg viewBox="0 0 18 18"><path d="M9 2h7v7a7 7 0 1 1-7-7z" fill="#f4f4f4" stroke="#999"/><circle cx="9" cy="9" r="4" fill="#fff" stroke="#888"/></svg></button>
          <i class="down"></i>
          <button aria-label="Pan"><svg viewBox="0 0 16 16"><path d="M5 14L2 9l2-1 1 1V4h1.500v4V2H8v6V3h1.500v5V4H11v6l2-3 1 1-3 6z" fill="#fafafa" stroke="#888"/></svg></button>
          <button aria-label="Zoom"><svg viewBox="0 0 16 16"><circle cx="7" cy="7" r="4.500" fill="#f6f6f6" stroke="#777"/><path d="M6 5h2v4H6z" fill="#ddd" stroke="#888"/><path d="M10 10l4 4" stroke="#777" stroke-width="2"/></svg></button>
          <i class="down"></i>
          <button aria-label="Orbit"><svg viewBox="0 0 16 16"><path d="M8 2l2 3H9v6h1l-2 3-2-3h1V5H6zM2 8l3-3v2h6V5l3 3-3 3V9H5v2z" fill="#eee" stroke="#888"/></svg></button>
          <i class="down"></i>
          <button aria-label="Look at"><svg viewBox="0 0 16 16"><path d="M3 6h10v7H3z" fill="#eee" stroke="#888"/><path d="M5 9h6v2H5zM5 6l7-3v3" fill="#ddd" stroke="#888"/></svg></button>
          <button aria-label="Bar options"><svg class="dot" viewBox="0 0 8 8"><circle cx="4" cy="4" r="2.500" fill="none" stroke="#999"/><path d="M2.500 4h3" stroke="#999"/></svg></button>
        </div>
        <svg class="triad" viewBox="0 0 46 42" role="img" aria-label="Axes">
          <path d="M21 24V14M21 24l9 5M21 24l-9 5" stroke="#777" fill="none"/>
          <path d="M17 15l4-8 4 8z" fill="#10a018" stroke="#0a6a10"/><path d="M27 30l4-6 6 8z" fill="#c01820" stroke="#801018"/><path d="M15 31l-4-6-5 7z" fill="#1a1ab8" stroke="#101078"/>
          <text x="18" y="6" fill="#3bd83b">Y</text><text x="2" y="37" fill="#3a3ac8">Z</text><text x="35" y="37" fill="#e04a4a">X</text>
        </svg>
      </div>
      <div class="doctabs">
        <button aria-label="Cascade"><svg viewBox="0 0 16 14"><path d="M1.500 1.500h8v4h-8zM3.500 5.500v3h3M6.500 7.500h7v5h-7zM4 4.500h7.500v3" fill="none" stroke="#bbb"/></svg></button>
        <button aria-label="Tile"><svg viewBox="0 0 16 14"><path d="M2.500 1.500h5v4h-5zM9.500 1.500h4v4h-4zM2.500 8.500h5v4h-5zM9.500 8.500h4v4h-4z" fill="none" stroke="#bbb"/></svg></button>
        <button aria-label="Tile rows"><svg viewBox="0 0 16 14"><path d="M1.500 1.500h12v4h-12zM1.500 8.500h12v4h-12z" fill="none" stroke="#bbb"/></svg></button>
        <button aria-label="Tile columns"><svg viewBox="0 0 16 14"><path d="M2.500 1.500h4v11h-4zM8.500 1.500h5v11h-5z" fill="none" stroke="#bbb"/></svg></button>
        <button aria-label="Document list"><svg viewBox="0 0 16 14"><path d="M4 10l4-6 4 6z" fill="#ddd"/></svg></button>
        <a class="home-tab" href="#">My Home</a>
        <a class="doc-tab" href="#">Part1 <svg viewBox="0 0 10 10"><path d="M2 2l6 6M8 2L2 8" stroke="#444" stroke-width="2"/></svg></a>
      </div>
    </section>
  </main>

  <div class="status"><span>Ready</span><span class="count">1</span><span class="count">1</span></div>

  <footer class="taskbar">
    <button class="start" aria-label="Start"><svg viewBox="0 0 30 30"><defs><radialGradient id="orb"><stop offset="0" stop-color="#7fd0f5"/><stop offset=".7" stop-color="#2c6fa8"/><stop offset="1" stop-color="#12304f"/></radialGradient></defs><circle cx="15" cy="15" r="14" fill="url(#orb)" stroke="#7a9ab5"/><path d="M8 9c2-1.500 4-1 6 0l-1 5c-2-1-4-1-6 0z" fill="#e8663a"/><path d="M15.500 9.500c2 1 4 1 6 0l-1 5c-2 1-4 1-6 0z" fill="#8cc63f"/><path d="M7 16c2-1.500 4-1 6 0l-1 5c-2-1-4-1-6 0z" fill="#4aa8e8"/><path d="M14 16.500c2 1 4 1 6 0l-1 5c-2 1-4 1-6 0z" fill="#f7cf3c"/></svg></button>
    <div class="apps">
      <button aria-label="Media Player"><svg viewBox="0 0 26 26"><path d="M3 4h18l2 2v16l-2 2H3z" fill="#7fb8d8"/><path d="M3 4h16v20H3z" fill="#a9d4e8"/><circle cx="11" cy="14" r="7" fill="#f08025" stroke="#fff"/><path d="M9 10l6 4-6 4z" fill="#fff"/></svg></button>
      <button class="open" aria-label="Chrome"><svg viewBox="0 0 26 26"><path d="M13 13L2.600 7A12 12 0 0 1 23.400 7z" fill="#dc4437"/><path d="M13 13l10.400-6A12 12 0 0 1 13 25z" fill="#fbcf3e"/><path d="M13 13v12A12 12 0 0 1 2.600 7z" fill="#1fa35a"/><path d="M13 7h10.400L18 16z" fill="#fbcf3e"/><circle cx="13" cy="13" r="5.800" fill="#f4f4f4"/><circle cx="13" cy="13" r="4.500" fill="#4285f4"/></svg></button>
      <button aria-label="Internet Explorer"><svg viewBox="0 0 26 26"><path d="M20.500 17A8 8 0 1 1 21.500 14H8" fill="none" stroke="#3fb4ea" stroke-width="4"/><path d="M3 22C-2 18 8 6 18 3c7-2 7 2 5 6" fill="none" stroke="#f3c92e" stroke-width="2"/></svg></button>
      <button aria-label="Photos"><svg viewBox="0 0 26 26"><g fill="#8d9296"><circle cx="7" cy="8" r="5"/><circle cx="19" cy="8" r="5"/><circle cx="6" cy="17" r="5"/><circle cx="20" cy="17" r="5"/><circle cx="13" cy="21" r="5"/><circle cx="13" cy="13" r="6"/></g><path d="M13 20c-3-6-5-9-4-14 1-7 7-7 8 0 1 5-1 8-4 14z" fill="#ee8a48"/></svg></button>
      <button aria-label="OneNote"><svg viewBox="0 0 26 26"><path d="M13 4h10v18H13z" fill="#fff" stroke="#80397b"/><path d="M17 8h6M17 12h6M17 16h6" stroke="#80397b" stroke-width="2"/><path d="M2 4l14-3v24L2 22z" fill="#80397b"/><text x="5" y="17">N</text></svg></button>
      <button class="open" aria-label="Word"><svg viewBox="0 0 26 26"><path d="M13 4h11v18H13z" fill="#fff" stroke="#2b579a"/><path d="M16 8h7M16 12h7M16 16h7" stroke="#2b579a" stroke-width="2"/><path d="M2 4l14-3v24L2 22z" fill="#2b579a"/><text x="3" y="17">W</text></svg></button>
      <button aria-label="Excel"><svg viewBox="0 0 26 26"><path d="M13 4h11v18H13z" fill="#fff" stroke="#1e7145"/><path d="M16 8h7M16 12h7M16 16h7M20 5v16" stroke="#1e7145"/><path d="M2 4l14-3v24L2 22z" fill="#1e7145"/><text x="5" y="17">X</text></svg></button>
      <button aria-label="Outlook"><svg viewBox="0 0 26 26"><path d="M13 7h12v13H13z" fill="#fff" stroke="#0072c6"/><path d="M14 9l5 5 6-6" stroke="#0072c6" fill="none" stroke-width="2"/><path d="M2 4l14-3v24L2 22z" fill="#0072c6"/><text x="4" y="17">O</text></svg></button>
      <button class="open" aria-label="PowerPoint"><svg viewBox="0 0 26 26"><path d="M13 4h11v18H13z" fill="#fff" stroke="#d04423"/><path d="M17 13h6M17 17h6" stroke="#d04423" stroke-width="2"/><circle cx="19" cy="8" r="3" fill="#d04423"/><path d="M2 4l14-3v24L2 22z" fill="#d04423"/><text x="5" y="17">P</text></svg></button>
      <button class="open" aria-label="Skype for Business"><svg viewBox="0 0 26 26"><circle cx="12" cy="12" r="12" fill="#e8f6fc"/><use href="#skype" width="24" height="24"/><circle cx="21" cy="21" r="5" fill="#d81e2c"/><path d="M18 21h6" stroke="#fff" stroke-width="1.500"/></svg></button>
      <button class="open" aria-label="Slack"><svg viewBox="0 0 26 26"><path d="M3 5l16-4 4 17-16 5z" fill="#f4f4f0"/><path d="M3 5l7-2 2 6-7 2z" fill="#54b596"/><path d="M17 1l4 1 3 16-4 1z" fill="#ecb22e"/><path d="M5 19l18-4 1 7-16 3z" fill="#d71f55"/><path d="M5 19l8-2-5 8z" fill="#382034"/><text x="9" y="16" fill="#222">S</text></svg></button>
      <button class="open" aria-label="Zoom"><svg viewBox="0 0 26 26"><circle cx="13" cy="13" r="12" fill="#3b86f6" stroke="#e3edfc"/><rect x="5" y="9" width="11" height="8" rx="2" fill="#fff"/><path d="M17 12l4-3v8l-4-3z" fill="#fff"/></svg></button>
      <button class="open" aria-label="Skype"><svg viewBox="0 0 26 26"><use href="#skype" width="26" height="26"/><circle cx="21" cy="19" r="4" fill="#f8fbd8"/></svg></button>
      <button class="open" aria-label="Notebook"><svg viewBox="0 0 26 26"><path d="M5 3l18-1-3 22-17 1z" fill="#e8e8e8" stroke="#333"/><path d="M6 4L4 24" stroke="#222" stroke-width="2" stroke-dasharray="2 1"/><path d="M20 3l-9 19" stroke="#333" stroke-width="2"/><path d="M10 6l4 5M16 12l2 8M8 16l4 2" stroke="#777" stroke-width="2"/></svg></button>
      <button class="open" aria-label="Library"><svg viewBox="0 0 26 26"><path d="M4 5l17-3 3 19-18 4z" fill="#5aa3cb" stroke="#2d6c96"/><path d="M9 6l1 12 11-2M14 5l1 12M19 4l1 12" stroke="#c5e2f1" fill="none"/></svg></button>
      <button class="open" aria-label="Inventor"><svg viewBox="0 0 26 26"><path d="M0 0h26v26H0z" fill="#fbe3cc"/><path d="M8 3h11l-1 3h-2v12h2l1 2H8l1-2h2V6H9z" fill="#d9802e"/><path d="M15 23h8" stroke="#d9802e" stroke-width="2" stroke-dasharray="2 1"/></svg></button>
      <button class="open" aria-label="Billiards"><svg viewBox="0 0 26 26"><path d="M0 0h26v26H0z" fill="#191919"/><circle cx="13" cy="15" r="8" fill="#d8d8d8"/><path d="M6 9L4 3l5 3 2-5 3 4 4-4 1 5 4-1-4 5c-4-2-8-2-13-1z" fill="#f2bb2a"/><circle cx="18" cy="15" r="3" fill="#334"/><path d="M5 21c5 4 11 4 16 0" stroke="#c8262e" stroke-width="2" stroke-dasharray="2 1" fill="none"/></svg></button>
    </div>
    <div class="tray">
      <label for="address">Address</label>
      <div class="address"><input id="address" type="text"><i class="down"></i><button aria-label="Refresh"><svg viewBox="0 0 14 14"><path d="M6 5H1.500M4 2L1 5l3 3M5.500 5v4M8 9h4.500M10 6l3 3-3 3M8.500 9V5" stroke="#3b82b8" fill="none"/></svg></button></div>
      <button class="up" aria-label="Hidden icons"></button>
      <svg class="signal" viewBox="0 0 14 12"><path d="M2 12V9M5 12V7M8 12V5M11 12V2" stroke="#eee" stroke-width="2"/></svg>
      <svg class="signal" viewBox="0 0 14 12"><path d="M1 4h2l4-4v12L3 8H1z" fill="#eee"/><path d="M9 4v4M11 3c1 2 1 4 0 6" stroke="#bbb" fill="none"/></svg>
      <div class="clock">1:20 PM<br>3/9/2018</div>
      <button class="desktop" aria-label="Show desktop"></button>
    </div>
  </footer>
</body>
</html>
```
FILE: styles.css
```css
* {
  box-sizing: border-box;
}
body {
  margin: 0;
  min-height: 100vh;
  display: flex;
  flex-direction: column;
  overflow-x: hidden;
  background: #f4f4f6;
  color: #444;
  font-family: Lato, "Open Sans", sans-serif;
  font-size: 10px;
  line-height: 13px;
}
button {
  margin: 0;
  padding: 0;
  border: 0;
  background: none;
  color: inherit;
  font: inherit;
}
a {
  color: inherit;
  text-decoration: none;
}
svg {
  display: block;
  flex: none;
}
.sprite {
  position: absolute;
  width: 0;
  height: 0;
}
h1, h2 {
  margin: 0;
  font-size: 10px;
  font-weight: normal;
}
.down {
  flex: none;
  border: 2px solid transparent;
  border-top: 3px solid #333;
  border-bottom: 0;
}

/* title bar */
.top {
  position: relative;
  background: #535353;
  color: #d4d4d4;
}
.titlebar {
  display: flex;
  align-items: center;
  height: 19px;
}
.logo {
  width: 22px;
  padding-left: 2px;
}
.logo svg {
  width: 14px;
  height: 18px;
}
.qat {
  flex: none;
  display: flex;
  justify-content: center;
  width: 20px;
}
.qat svg {
  width: 13px;
  height: 13px;
}
.caret, .more, .up {
  flex: none;
  width: 10px;
  height: 12px;
  display: flex;
  align-items: center;
  justify-content: center;
}
.caret::before {
  content: "";
  border: 2px solid transparent;
  border-top: 3px solid #bbb;
  border-bottom: 0;
}
.more {
  width: 12px;
}
.more::before {
  content: "";
  width: 7px;
  height: 7px;
  background: linear-gradient(#ddd 0 1px, transparent 1px 3px, #ddd 3px);
  clip-path: polygon(0 0, 100% 0, 100% 45%, 50% 100%, 0 45%);
}
.divider {
  flex: none;
  width: 1px;
  height: 15px;
  margin: 0 1px 0 4px;
  background: #777;
}
.divider.wide {
  margin: 0 4px 0 5px;
}
.combo {
  flex: none;
  position: relative;
  display: flex;
  align-items: center;
  width: 82px;
  height: 18px;
  margin-left: 1px;
  background: #858585;
}
.combo svg {
  width: 13px;
  height: 13px;
  margin-left: 2px;
}
.combo select {
  flex: 1;
  min-width: 0;
  height: 18px;
  padding: 0 4px;
  border: 0;
  appearance: none;
  background: transparent;
  color: #444;
  font: inherit;
}
.combo::after {
  content: "";
  margin-right: 3px;
  border: 3px solid transparent;
  border-top: 4px solid #444;
  border-bottom: 0;
}
.title {
  flex: 1;
  text-align: center;
  white-space: nowrap;
}
.title span {
  margin-left: 8px;
}
.play {
  margin-right: 5px;
  border: 3px solid transparent;
  border-left: 4px solid #ddd;
  border-right: 0;
}
.search {
  flex: none;
  width: 149px;
  height: 17px;
  padding: 0 4px;
  border: 0;
  background: #858585;
  color: #fff;
  font: inherit;
}
.search::placeholder {
  color: #ccc;
}
.signin {
  width: 70px;
  padding-left: 1px;
  text-align: left;
}
.winbtns {
  display: flex;
  gap: 1px;
  margin-left: 13px;
}

/* ribbon tabs */
.tabs {
  display: flex;
  height: 19px;
  line-height: 20px;
}
.tabs a {
  padding: 0 8px;
}
.tabs .file {
  width: 37px;
  padding: 0 0 0 10px;
  background: #f5821f;
  color: #fff;
}
.tabs .active {
  background: #f6f6f8;
  color: #555;
}
.ribbon-toggle {
  margin-left: 19px;
}
.ribbon-toggle svg {
  width: 20px;
  height: 8px;
}
.watermark {
  position: absolute;
  left: 20px;
  top: 18px;
  color: #fff;
  font: 31px/34px "Liberation Sans", sans-serif;
  opacity: .8;
  pointer-events: none;
  z-index: 2;
}

/* ribbon */
.ribbon {
  display: flex;
  background: #f5f5f7;
}
.panel {
  flex: none;
  padding-top: 1px;
  border-left: 1px solid #e4e4e8;
}
.panel h2 {
  display: flex;
  align-items: center;
  justify-content: center;
  gap: 5px;
  height: 14px;
  margin-top: 1px;
}
.panel h2 .down {
  border-width: 4px 3px 0;
}
.tools {
  display: grid;
  height: 63px;
}
.sketch { width: 65px; border-left: 0; }
.create { width: 255px; }
.create .tools { grid-template-columns: 40px 40px 55px 60px 1fr; }
.modify { width: 301px; }
.modify .tools { grid-template-columns: 32px 32px 63px 93px 1fr; }
.explore { width: 54px; }
.work { width: 106px; }
.work .tools { grid-template-columns: 44px 1fr; }
.pattern { width: 45px; }
.pattern .tools { grid-template-columns: 20px 20px; }
.freeform { width: 98px; }
.freeform .tools { grid-template-columns: 36px 1fr; }
.surface { width: 163px; }
.surface .tools { grid-template-columns: 53px 87px 20px; }
.simulation { width: 56px; }
.convert { width: 61px; }

.big {
  position: relative;
  display: flex;
  flex-direction: column;
  align-items: center;
  padding-top: 3px;
  white-space: nowrap;
}
.big svg {
  width: 28px;
  height: 28px;
  margin-bottom: 2px;
}
.big .down {
  margin-top: 4px;
}
.big .side {
  position: absolute;
  right: 4px;
  bottom: 13px;
}
.col {
  display: grid;
  grid-template-rows: repeat(3, 21px);
}
.small {
  display: flex;
  align-items: center;
  gap: 4px;
  padding-left: 3px;
  white-space: nowrap;
}
.small svg {
  width: 14px;
  height: 14px;
}
.small .down {
  margin-left: 4px;
}
.icons button {
  display: flex;
  align-items: center;
  justify-content: center;
  width: 18px;
  height: 18px;
  margin: 1px;
  border: 1px solid #ddd;
}
.icons svg {
  width: 14px;
  height: 14px;
}
.ribbon-end {
  padding: 2px 0 0 2px;
  border-left: 1px solid #e4e4e8;
}
.ribbon-end button {
  display: flex;
  align-items: center;
  gap: 6px;
  height: 18px;
  padding: 0 3px 0 1px;
  border: 1px solid #ccc;
}
.ribbon-end svg {
  width: 14px;
  height: 14px;
}

/* model browser */
.workspace {
  flex: 1;
  display: flex;
}
.browser {
  flex: none;
  width: 316px;
  border-right: 3px solid #5a5a5a;
  background: #fff;
}
.browser-head {
  display: flex;
  align-items: center;
  height: 16px;
  background: #5a5a5a;
}
.browser-head svg {
  width: 10px;
  height: 10px;
}
.browser-tab {
  display: flex;
  align-items: center;
  justify-content: space-between;
  width: 53px;
  height: 16px;
  margin-right: 2px;
  padding: 0 8px 0 5px;
  background: #f6f6f6;
  color: #666;
  font-size: 9px;
}
.browser-tab svg {
  width: 8px;
  height: 8px;
}
.browser-tools {
  display: flex;
  gap: 6px;
  margin-left: auto;
}
.tree {
  display: grid;
  grid-auto-rows: 1fr;
  height: 150px;
  margin: 1px 0 0;
  padding: 0;
  list-style: none;
  color: #111;
  font-size: 9px;
}
.tree li {
  display: flex;
  align-items: center;
  gap: 2px;
  padding-left: 15px;
}
.tree li::before {
  content: "";
  width: 4px;
  height: 4px;
  margin: 0 5px 0 -12px;
  border: 1px solid transparent;
  border-width: 1px 1px 0 0;
}
.tree .fold::before {
  border-color: #888;
  transform: rotate(45deg);
}
.tree .root {
  padding-left: 2px;
}
.tree .root::before {
  display: none;
}
.tree svg {
  width: 14px;
  height: 14px;
}

/* document */
.document {
  flex: 1;
  display: flex;
  flex-direction: column;
}
.viewport {
  flex: 1;
  position: relative;
  min-height: 320px;
  background: #ededed;
}
.model {
  position: absolute;
  width: 100%;
  height: 100%;
}
.mdi {
  position: absolute;
  top: 4px;
  right: 0;
  display: flex;
  gap: 3px;
}
.mdi svg {
  width: 10px;
  height: 10px;
}
.viewcube {
  position: absolute;
  top: 28px;
  right: 11px;
  width: 60px;
  height: 62px;
  fill: #888;
  font: bold 6px "Liberation Sans", sans-serif;
}
.navbar {
  position: absolute;
  top: 97px;
  right: 1px;
  display: flex;
  flex-direction: column;
  align-items: center;
  width: 22px;
  border: 1px solid #aaa;
  border-radius: 3px;
  background: #f0f0f0;
}
.navbar svg {
  width: 16px;
  height: 16px;
}
.navbar .dot {
  width: 8px;
  height: 8px;
  margin-left: 10px;
}
.navbar button {
  margin-bottom: 1px;
}
.navbar .down {
  margin: 3px 0;
  border-top-color: #888;
}
.triad {
  position: absolute;
  left: 14px;
  bottom: 17px;
  width: 46px;
  height: 42px;
  overflow: visible;
  font: 8px "Liberation Sans", sans-serif;
}
.doctabs {
  display: flex;
  align-items: center;
  height: 20px;
  background: #5f5f5f;
}
.doctabs button {
  display: flex;
  justify-content: center;
  width: 20px;
}
.doctabs button svg {
  width: 16px;
  height: 14px;
}
.doctabs a {
  display: flex;
  align-items: center;
  height: 20px;
}
.home-tab {
  width: 61px;
  padding-left: 6px;
  border-left: 1px solid #888;
  color: #ddd;
}
.doc-tab {
  gap: 5px;
  width: 53px;
  padding-left: 6px;
  background: #f4f4f4;
}
.doc-tab svg {
  width: 10px;
  height: 10px;
}

.status {
  display: flex;
  align-items: center;
  height: 20px;
  background: #f4f4f6;
  color: #333;
}
.status span:first-child {
  margin-right: auto;
}
.status .count {
  width: 26px;
  padding-left: 7px;
  border-left: 1px solid #e8e8e8;
}

/* taskbar */
.taskbar {
  display: flex;
  align-items: center;
  height: 31px;
  border-top: 1px solid #666;
  background:
    radial-gradient(circle at 385px 10px, #8a8d8c, transparent 20px),
    radial-gradient(circle at 425px 20px, #3c4042, transparent 20px),
    radial-gradient(circle at 862px 22px, #aaaca8, transparent 16px),
    radial-gradient(circle at 886px 6px, #8d908c, transparent 14px),
    radial-gradient(circle at 848px 4px, #3c3e3c, transparent 16px),
    linear-gradient(90deg, #080a12 360px, #555856 390px, #777a78 600px, #5c5c5a 890px, #08080c 912px);
  color: #eee;
}
.start {
  flex: none;
  display: flex;
  justify-content: center;
  width: 45px;
}
.start svg {
  width: 30px;
  height: 30px;
}
.apps {
  flex: none;
  display: grid;
  grid-template-columns: repeat(17, 1fr);
  width: 794px;
  height: 30px;
}
.apps button {
  display: flex;
  align-items: center;
  justify-content: center;
  margin-right: 1px;
}
.apps .open {
  border: 1px solid #999;
  border-radius: 2px;
  background: linear-gradient(135deg, rgba(255, 255, 255, .5), rgba(255, 255, 255, .15));
}
.apps svg {
  width: 25px;
  height: 25px;
  fill: #fff;
  font: bold 13px "Liberation Sans", sans-serif;
}
.tray {
  display: flex;
  align-items: center;
  margin-left: auto;
  white-space: nowrap;
}
.tray label {
  margin-right: 3px;
}
.address {
  display: flex;
  align-items: center;
  width: 194px;
  height: 17px;
  background: #fff;
}
.address input {
  flex: 1;
  min-width: 0;
  height: 17px;
  padding: 0 3px;
  border: 0;
  background: transparent;
  font: inherit;
}
.address .down {
  margin-right: 5px;
  border-width: 4px 3px 0;
}
.address button {
  padding: 1px 3px 2px 2px;
  border-left: 1px solid #bbb;
}
.address svg {
  width: 14px;
  height: 14px;
}
.up {
  margin: 0 11px 0 6px;
}
.up::before {
  content: "";
  border: 3px solid transparent;
  border-bottom: 4px solid #eee;
  border-top: 0;
}
.signal {
  width: 14px;
  height: 12px;
  margin-right: 6px;
}
.clock {
  width: 55px;
  line-height: 14px;
  text-align: center;
}
.desktop {
  width: 9px;
  height: 30px;
  margin-left: 2px;
  border: 1px solid #444;
  background: #1c1c20;
}
```
